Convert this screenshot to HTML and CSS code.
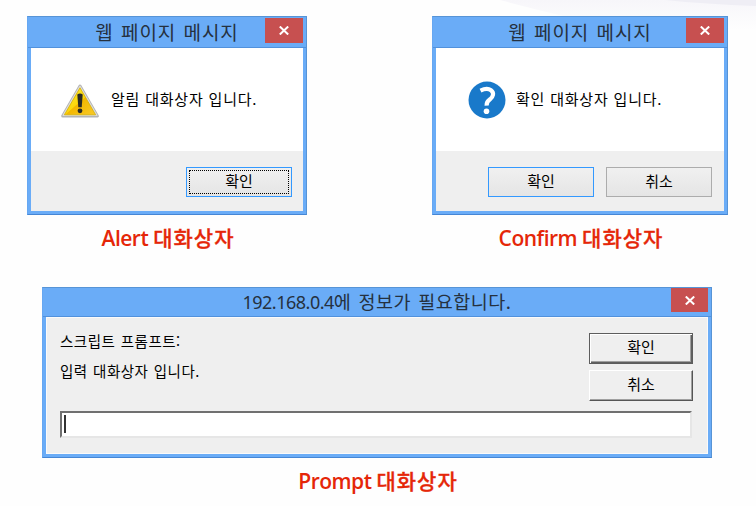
FILE: index.html
```html
<!DOCTYPE html>
<html lang="ko">
<head>
<meta charset="utf-8">
<title>대화상자</title>
<link rel="stylesheet" href="styles.css">
</head>
<body>
<svg class="swoosh" viewBox="0 0 256 60" aria-hidden="true">
  <defs><linearGradient id="haze" x1="0" y1="0" x2="0" y2="1"><stop offset="0" stop-color="#f7f6fa"/><stop offset=".6" stop-color="#fefefe"/></linearGradient></defs>
  <path d="M0 0H256V50Q130 35 0 0Z" fill="url(#haze)"/>
  <path d="M165 0H256V6Q205 4 165 0Z" fill="#efeef5"/>
</svg>
<main class="page">
  <div class="top-row">
    <figure class="example alert">
      <section class="window">
        <header class="titlebar"><h2 class="title">웹 페이지 메시지</h2>
          <span class="close"><svg viewBox="0 0 10 9"><path d="M.8.5 9.2 8.5M9.2.5.8 8.5"/></svg></span></header>
        <div class="client">
          <div class="message">
            <svg class="icon" viewBox="0 0 38 34">
              <defs>
                <linearGradient id="gold" x1="0" y1="0" x2="1" y2="1"><stop offset="0" stop-color="#fff03a"/><stop offset=".5" stop-color="#fbd70c"/><stop offset=".52" stop-color="#f4b800"/><stop offset="1" stop-color="#f8ca28"/></linearGradient>
              </defs>
              <path d="M19 2 36.3 32H1.7Z" fill="#b4b4b4" stroke="#b4b4b4" stroke-width="3" stroke-linejoin="round"/>
              <path d="M19 2.5 35.8 31.3H2.2Z" fill="#dcdcdc" stroke="#dcdcdc" stroke-width="1.5" stroke-linejoin="round"/>
              <path d="M19 3.8 34.6 30.8H3.4Z" fill="url(#gold)" stroke="#d8b000" stroke-width=".8" stroke-linejoin="round"/>
              <path d="M16.3 10.5Q19 8.3 21.7 10.5L20.7 23.3H17.3Z" fill="#2b2b25"/>
              <circle cx="19" cy="26.8" r="2.4" fill="#2b2b25"/>
            </svg>
            <p class="text">알림 대화상자 입니다.</p>
          </div>
          <div class="actions"><button class="button default focused">확인</button></div>
        </div>
      </section>
      <figcaption class="caption">Alert <b>대화상자</b></figcaption>
    </figure>
    <figure class="example confirm">
      <section class="window">
        <header class="titlebar"><h2 class="title">웹 페이지 메시지</h2>
          <span class="close"><svg viewBox="0 0 10 9"><path d="M.8.5 9.2 8.5M9.2.5.8 8.5"/></svg></span></header>
        <div class="client">
          <div class="message">
            <svg class="icon" viewBox="0 0 38 38">
              <circle cx="19" cy="19" r="18.5" fill="#1979ca"/>
              <path d="M12.5 9.6Q19 6.4 23 9.2C26.6 11.8 25 16 22 18.3Q18.4 20.8 18.6 24.6" fill="none" stroke="#fff" stroke-width="4.2"/>
              <circle cx="18.5" cy="30.2" r="2.8" fill="#fff"/>
            </svg>
            <p class="text">확인 대화상자 입니다.</p>
          </div>
          <div class="actions"><button class="button default">확인</button><button class="button">취소</button></div>
        </div>
      </section>
      <figcaption class="caption">Confirm <b>대화상자</b></figcaption>
    </figure>
  </div>
  <figure class="example prompt">
    <section class="window">
      <header class="titlebar"><h2 class="title"><span class="host">192.168.0.4</span>에 정보가 필요합니다.</h2>
        <span class="close"><svg viewBox="0 0 10 9"><path d="M.8.5 9.2 8.5M9.2.5.8 8.5"/></svg></span></header>
      <div class="client">
        <div class="question">
          <div class="lines"><p class="text">스크립트 프롬프트:</p><p class="text">입력 대화상자 입니다.</p></div>
          <div class="stack"><button class="classic primary">확인</button><button class="classic">취소</button></div>
        </div>
        <div class="field"><span class="caret"></span></div>
      </div>
    </section>
    <figcaption class="caption">Prompt <b>대화상자</b></figcaption>
  </figure>
</main>
</body>
</html>
```
FILE: styles.css
```css
* { box-sizing: border-box; }
body { margin: 0; background: #fefefe; font-family: "Noto Sans CJK KR", sans-serif; color: #111; }
h2, p, figure { margin: 0; }
button { font-family: inherit; padding: 0; color: #000; border-radius: 0; }
.swoosh { position: absolute; top: 0; right: 0; width: 256px; height: 60px; z-index: -1; }
.page { width: 756px; height: 506px; padding: 16px 28px 0 27px; overflow: hidden; }
.top-row { display: flex; justify-content: space-between; height: 271px; }
.alert { width: 280px; }
.confirm { width: 296px; }
.window { display: flex; flex-direction: column; height: 199px; padding: 0 3px 3px; background: #6aacf7; border: 1px solid #5794d6; border-left-color: #66a7f2; border-bottom-color: #4586d5; }
.titlebar { display: flex; justify-content: center; height: 31px; border-bottom: 1px solid #5191dc; margin: 0 -3px; position: relative; flex: none; }
.title { font-size: 19px; font-weight: 400; line-height: 30px; letter-spacing: .9px; word-spacing: 1.2px; color: #25313f; white-space: nowrap; }
.close { position: absolute; top: 1px; right: 3px; width: 38px; height: 25px; background: #c75050; display: flex; align-items: center; justify-content: center; }
.close svg { width: 10px; height: 9px; }
.close path { stroke: #fff; stroke-width: 2; fill: none; }
.client { flex: 1; display: flex; flex-direction: column; background: #efefef; }
.message { height: 103px; background: #fff; display: flex; align-items: center; }
.text { font-size: 15px; line-height: 20px; letter-spacing: .75px; word-spacing: .2px; white-space: nowrap; color: #000; }
.alert .icon { width: 38px; height: 34px; margin: 3px 12px 0 30px; }
.confirm .icon { width: 38px; height: 38px; margin: 0 10px 0 32px; }
.message .text { margin-top: -2px; }
.actions { display: flex; justify-content: flex-end; gap: 12px; padding: 16px 11px 0 0; }
.confirm .actions { padding-right: 12px; }
.button { width: 106px; height: 30px; border: 1px solid #acacac; background: linear-gradient(#f0f0f0, #e5e5e5); font-size: 15px; line-height: 24px; padding-bottom: 2px; }
.button.default { border-color: #3399ff; }
.focused { outline: 1px dotted #000; outline-offset: -4px; }
.caption { font-family: "Open Sans", "Noto Sans CJK KR", sans-serif; font-weight: 600; font-size: 21px; line-height: 28px; letter-spacing: -.5px; color: #e52608; text-align: center; padding: 8px 0 0 2px; white-space: nowrap; }
.caption b { font-family: "Noto Sans CJK KR", sans-serif; font-weight: 500; font-size: 21px; letter-spacing: 1px; -webkit-text-stroke: .3px #e52608; }
.prompt { width: 670px; margin-left: 15px; }
.prompt .window { height: 171px; }
.prompt .titlebar { height: 29px; }
.prompt .title { font-size: 18.5px; line-height: 27px; letter-spacing: .5px; word-spacing: 1.5px; }
.prompt .host { font-family: "Noto Sans", sans-serif; font-size: 18px; letter-spacing: -.5px; }
.prompt .close { height: 24px; top: 0; width: 37px; }
.prompt .client { padding: 15px 14px 0 13px; border: 1px solid #fafafa; }
.question { display: flex; justify-content: space-between; height: 78px; }
.lines { display: flex; flex-direction: column; gap: 10px; margin-top: -2px; }
.lines .text { font-size: 14.5px; letter-spacing: .5px; word-spacing: .8px; }
.stack { display: flex; flex-direction: column; gap: 6px; }
.classic { width: 104px; height: 31px; background: #efefef; border: 1px solid; border-color: #fff #555 #555 #fff; box-shadow: inset -1px -1px #a0a0a0; font-size: 15px; line-height: 24px; padding-bottom: 3px; }
.classic.primary { border-color: #5d5d5d; box-shadow: inset 1px 1px #fff, inset -1px -1px #606060, inset -2px -2px #a0a0a0; }
.field { width: 632px; height: 27px; background: #fff; border: 2px solid; border-color: #707070 #e6e6e6 #e6e6e6 #707070; padding: 2px; }
.caret { display: block; width: 2px; height: 18px; background: #333; }
```
